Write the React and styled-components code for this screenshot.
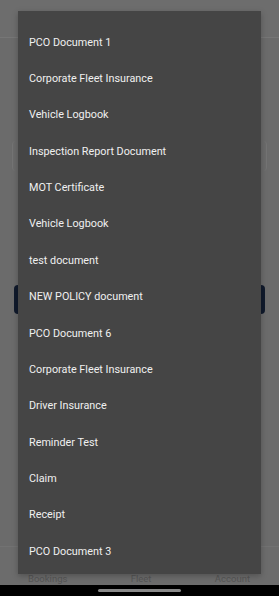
import React from "react";
import styled, { createGlobalStyle } from "styled-components";

const Global = createGlobalStyle`
  html, body { margin: 0; padding: 0; }
  body { font-family: Roboto, "Noto Sans", sans-serif; background: #6c6c6c; }
`;

const Screen = styled.div`
  position: relative;
  width: 279px;
  height: 596px;
  overflow: hidden;
  background: #6b6b6b;
  display: flex;
  flex-direction: column;
`;

const Header = styled.div`
  height: 37px;
  flex-shrink: 0;
  background: #6d6d6d;
  border-bottom: 1px solid #767676;
`;

const Body = styled.div`
  flex: 1;
  display: flex;
  flex-direction: column;
  padding: 103px 14px 0;
`;

const Field = styled.div`
  height: 30px;
  margin: 0 -2px;
  border-left: 1px solid #747474;
  border-right: 1px solid #747474;
  border-radius: 4px;
`;

const PrimaryButton = styled.div`
  margin-top: 114px;
  height: 29px;
  border-radius: 4px;
  background: #101a2c;
`;

const BottomNav = styled.div`
  height: 37px;
  flex-shrink: 0;
  display: flex;
  justify-content: space-between;
  align-items: flex-end;
  padding: 0 29px 1px 28px;
  background: #6c6c6c;
  border-top: 1px solid #727272;
`;

const NavLabel = styled.span`
  font-size: 9.5px;
  color: #555555;
  line-height: 11px;
`;

const SystemBar = styled.div`
  height: 11px;
  flex-shrink: 0;
  background: #000;
  display: flex;
  justify-content: center;
  align-items: center;
`;

const HomeIndicator = styled.div`
  width: 83px;
  height: 3px;
  border-radius: 2px;
  background: #8a8a8a;
`;

const Menu = styled.ul`
  position: absolute;
  left: 18px;
  top: 11px;
  width: 243px;
  height: 563px;
  margin: 0;
  padding: 13px 0 0;
  list-style: none;
  box-sizing: border-box;
  background: #454545;
  box-shadow: 0 2px 6px rgba(0, 0, 0, 0.25);
  overflow: hidden;
`;

const MenuItem = styled.li`
  height: 36.36px;
  display: flex;
  align-items: center;
  padding-left: 11px;
  font-size: 10.8px;
  color: #f0f0f0;
  white-space: nowrap;
`;

const items = [
  "PCO Document 1",
  "Corporate Fleet Insurance",
  "Vehicle Logbook",
  "Inspection Report Document",
  "MOT Certificate",
  "Vehicle Logbook",
  "test document",
  "NEW POLICY document",
  "PCO Document 6",
  "Corporate Fleet Insurance",
  "Driver Insurance",
  "Reminder Test",
  "Claim",
  "Receipt",
  "PCO Document 3",
];

export default function App() {
  return (
    <>
      <Global />
      <Screen>
        <Header />
        <Body>
          <Field />
          <PrimaryButton />
        </Body>
        <BottomNav>
          <NavLabel>Bookings</NavLabel>
          <NavLabel>Fleet</NavLabel>
          <NavLabel>Account</NavLabel>
        </BottomNav>
        <SystemBar>
          <HomeIndicator />
        </SystemBar>
        <Menu>
          {items.map((t, i) => (
            <MenuItem key={i}>{t}</MenuItem>
          ))}
        </Menu>
      </Screen>
    </>
  );
}
